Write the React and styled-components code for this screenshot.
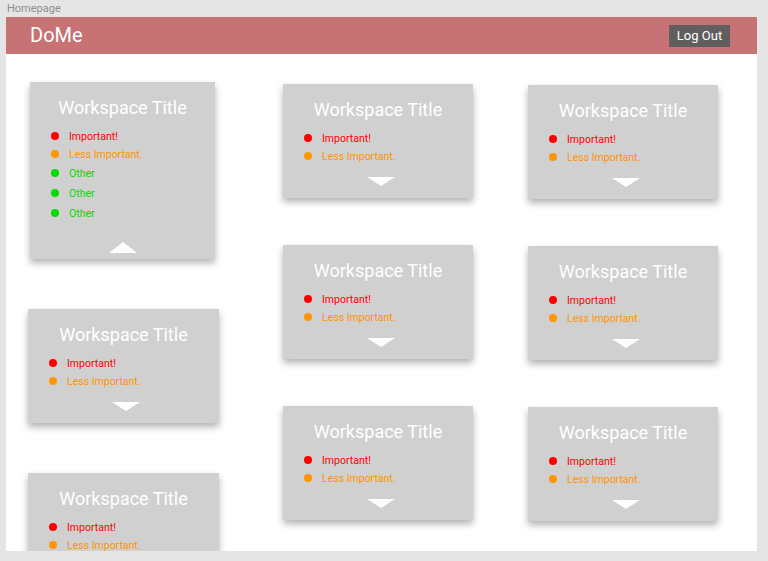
import React from "react";
import styled, { createGlobalStyle } from "styled-components";

const GlobalStyle = createGlobalStyle`
  html, body {
    margin: 0;
    padding: 0;
    background: #e5e5e5;
    font-family: Roboto, "Noto Sans", sans-serif;
  }
`;

const Canvas = styled.div`
  width: 768px;
  height: 561px;
  overflow: hidden;
  background: #e5e5e5;
`;

const FrameLabel = styled.div`
  height: 17px;
  padding-left: 7px;
  font-size: 11px;
  line-height: 18px;
  color: #8e8e8e;
`;

const Frame = styled.div`
  margin-left: 6px;
  width: 751px;
  height: 534px;
  background: #ffffff;
  overflow: hidden;
`;

const Header = styled.header`
  height: 37px;
  background: #c77274;
  display: flex;
  align-items: center;
  justify-content: space-between;
  padding: 0 27px 0 24px;
`;

const Logo = styled.div`
  color: #ffffff;
  font-size: 20px;
  line-height: 24px;
  margin-top: -2px;
`;

const LogOutButton = styled.button`
  width: 61px;
  height: 22px;
  border: none;
  background: #5f5f5f;
  color: #ffffff;
  font-family: Roboto, sans-serif;
  font-size: 13px;
  padding: 0;
  cursor: pointer;
`;

const Board = styled.main`
  display: flex;
  padding-left: 22px;
`;

const Column = styled.div`
  display: flex;
  flex-direction: column;
  width: ${(p) => p.$width}px;
  margin-left: ${(p) => p.$left}px;
  padding-top: ${(p) => p.$top}px;
  gap: ${(p) => p.$gap}px;
`;

const Card = styled.section`
  display: flex;
  flex-direction: column;
  box-sizing: border-box;
  width: ${(p) => p.$width || 190}px;
  margin-left: ${(p) => p.$shift || 0}px;
  height: ${(p) => (p.$open ? 177 : 114)}px;
  padding-top: 14px;
  background: #d0d0d0;
  box-shadow: 0 4px 7px rgba(0, 0, 0, 0.3);
  flex-shrink: 0;
`;

const Title = styled.h2`
  margin: 0;
  font-size: 18px;
  font-weight: 400;
  line-height: 24px;
  color: #ffffff;
  text-align: center;
`;

const TaskList = styled.ul`
  list-style: none;
  margin: 7px 0 0;
  padding: 0 0 0 21px;
`;

const Task = styled.li`
  display: flex;
  align-items: center;
  height: ${(p) => (p.$tall ? 20 : 18)}px;
  font-size: 10.5px;
  color: ${(p) => p.$color};
`;

const Dot = styled.span`
  width: 8px;
  height: 8px;
  border-radius: 50%;
  background: ${(p) => p.$color};
  margin-right: 10px;
  flex-shrink: 0;
`;

const Toggle = styled.div`
  margin: auto 0 ${(p) => (p.$open ? 6 : 12)}px ${(p) => (p.$open ? 0 : 5)}px;
  align-self: center;
  width: 0;
  height: 0;
  border-left: 14px solid transparent;
  border-right: 14px solid transparent;
  ${(p) =>
    p.$open
      ? "border-bottom: 11px solid #ffffff;"
      : "border-top: 9px solid #ffffff;"}
`;

const COLORS = {
  important: "#ff0000",
  less: "#ff9500",
  other: "#00dd00",
};

const shortTasks = [
  { kind: "important", label: "Important!" },
  { kind: "less", label: "Less Important." },
];

const longTasks = [
  ...shortTasks,
  { kind: "other", label: "Other" },
  { kind: "other", label: "Other" },
  { kind: "other", label: "Other" },
];

const Workspace = ({ open, width, shift }) => {
  const tasks = open ? longTasks : shortTasks;
  return (
    <Card $open={open} $width={width} $shift={shift}>
      <Title>Workspace Title</Title>
      <TaskList>
        {tasks.map((t, i) => (
          <Task key={i} $color={COLORS[t.kind]} $tall={t.kind === "other"}>
            <Dot $color={COLORS[t.kind]} />
            {t.label}
          </Task>
        ))}
      </TaskList>
      <Toggle $open={open} />
    </Card>
  );
};

const App = () => (
  <Canvas>
    <GlobalStyle />
    <FrameLabel>Homepage</FrameLabel>
    <Frame>
      <Header>
        <Logo>DoMe</Logo>
        <LogOutButton>Log Out</LogOutButton>
      </Header>
      <Board>
        <Column $width={191} $left={0} $top={28} $gap={50}>
          <Workspace open width={185} shift={2} />
          <Workspace width={191} />
          <Workspace width={191} />
        </Column>
        <Column $width={190} $left={64} $top={30} $gap={47}>
          <Workspace />
          <Workspace />
          <Workspace />
        </Column>
        <Column $width={190} $left={55} $top={31} $gap={47}>
          <Workspace />
          <Workspace />
          <Workspace />
        </Column>
      </Board>
    </Frame>
  </Canvas>
);

export default App;
